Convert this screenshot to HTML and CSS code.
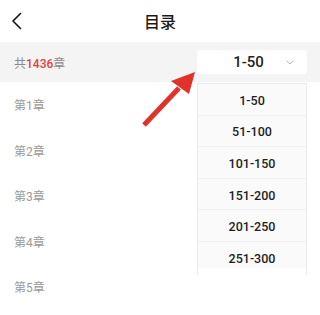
FILE: index.html
```html
<!DOCTYPE html>
<html lang="zh">
<head>
<meta charset="utf-8">
<link rel="stylesheet" href="styles.css">
</head>
<body>
<div class="page">
  <header class="topbar">
    <svg class="back" width="12" height="18" viewBox="0 0 12 18"><path d="M9.5 1.5 L2 9 L9.5 16.5" fill="none" stroke="#111" stroke-width="1.6" stroke-linecap="round" stroke-linejoin="round"/></svg>
    <h1 class="title">目录</h1>
  </header>
  <div class="summary">
    <span class="count">共<em>1436</em>章</span>
    <div class="select">
      <span class="select-value">1-50</span>
      <svg class="caret" width="8" height="5" viewBox="0 0 8 5"><path d="M0.5 0.8 L4 4 L7.5 0.8" fill="none" stroke="#b5b5b5" stroke-width="1"/></svg>
    </div>
  </div>
  <ul class="chapters">
    <li>第1章</li>
    <li>第2章</li>
    <li>第3章</li>
    <li>第4章</li>
    <li>第5章</li>
  </ul>
  <ul class="menu">
    <li>1-50</li>
    <li>51-100</li>
    <li>101-150</li>
    <li>151-200</li>
    <li>201-250</li>
    <li>251-300</li>
  </ul>
  <svg class="arrow" width="320" height="315" viewBox="0 0 320 315">
    <line x1="144" y1="125" x2="179" y2="88" stroke="#e0322b" stroke-width="5" stroke-linecap="butt"/>
    <polygon points="195,72 171,81 189,94" fill="#e0322b"/>
  </svg>
</div>
</body>
</html>
```
FILE: styles.css
```css
* { box-sizing: border-box; }
html, body { margin: 0; padding: 0; background: #fff; }
body { font-family: Roboto, "Noto Sans CJK SC", sans-serif; }
.page { position: relative; width: 320px; height: 315px; overflow: hidden; }
.topbar {
  height: 42px;
  display: flex;
  align-items: center;
  justify-content: center;
  position: relative;
}
.back { position: absolute; left: 11px; top: 12px; }
.title { margin: 0; font-family: "Noto Sans CJK SC", sans-serif; font-size: 16px; font-weight: 500; color: #1a1a1a; line-height: 1; }
.summary {
  height: 40px;
  background: #f4f4f4;
  display: flex;
  align-items: center;
  justify-content: space-between;
  padding: 0 13px 0 14px;
}
.count { font-size: 12px; color: #8a8a8a; }
.count em { font-style: normal; color: #e8413a; font-weight: 500; }
.select {
  position: relative;
  width: 110px;
  height: 24px;
  background: #fff;
  border-radius: 4px;
  display: flex;
  align-items: center;
  justify-content: center;
}
.select-value { font-size: 15px; font-weight: 500; color: #222; margin-left: -7px; }
.caret { position: absolute; right: 13px; top: 10px; }
.chapters { list-style: none; margin: 0; padding: 0; }
.chapters li {
  height: 45.5px;
  display: flex;
  align-items: center;
  padding-left: 14px;
  font-size: 12px;
  color: #9a9a9a;
}
.menu {
  position: absolute;
  left: 197px;
  top: 83px;
  width: 110px;
  height: 192px;
  margin: 0;
  padding: 0;
  list-style: none;
  border: 1px solid #ebebeb;
  border-bottom: none;
  overflow: hidden;
  background: #fff;
}
.menu li {
  height: 31.6px;
  display: flex;
  align-items: center;
  justify-content: center;
  font-size: 12.5px;
  font-weight: 500;
  color: #1e1e1e;
  background: #fafafa;
  border-bottom: 1px solid #f0f0f0;
  padding-top: 2px;
}
.menu li:last-child {
  border-bottom: none;
  background: linear-gradient(#fafafa 0, #fafafa 26px, #fff 26px);
}
.arrow { position: absolute; left: 0; top: 0; pointer-events: none; }
```
